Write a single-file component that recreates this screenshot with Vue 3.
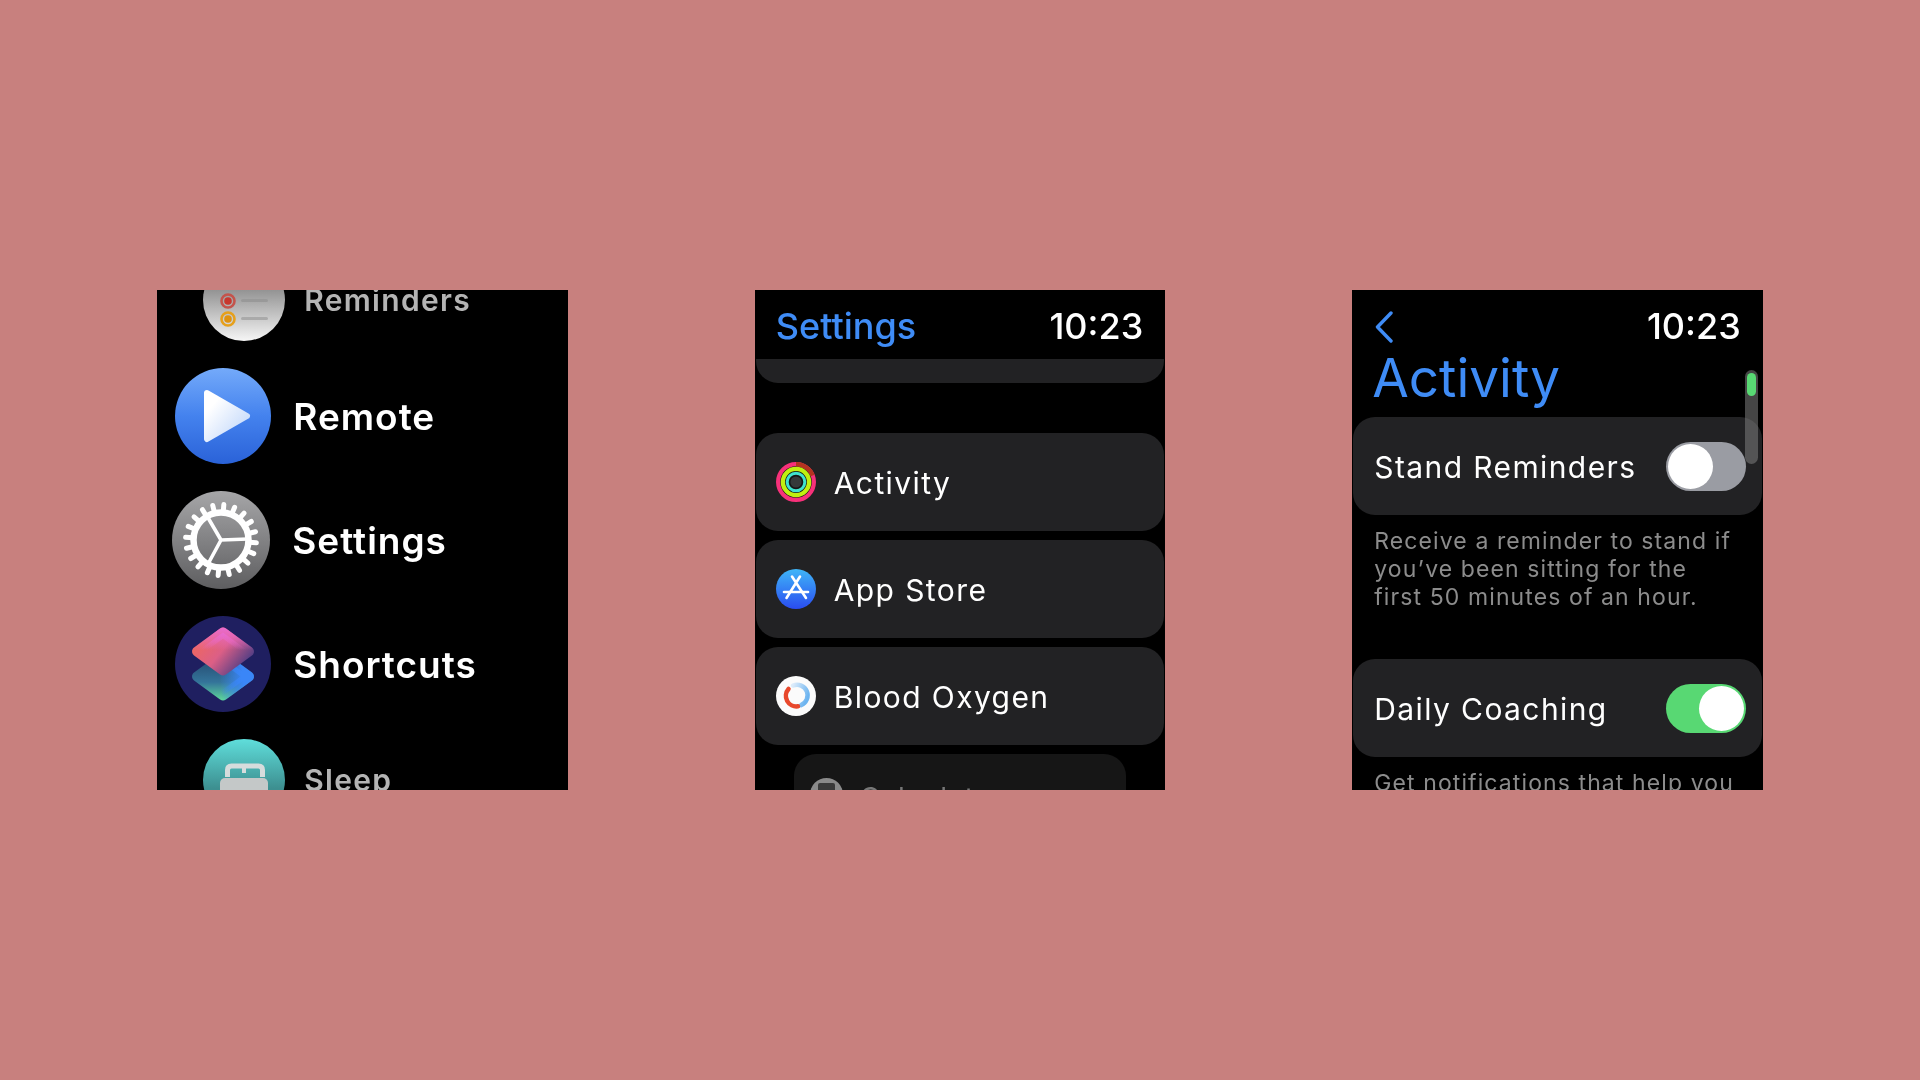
<template>
  <div class="page">
    <!-- App list -->
    <section class="screen">
      <div class="app-list">
        <div class="app-row small indent-far">
          <svg class="app-icon" viewBox="0 0 82 82">
            <defs>
              <linearGradient id="remBg" x1="0" y1="0" x2="0" y2="1">
                <stop offset="0.35" stop-color="#8f8f8f" />
                <stop offset="1" stop-color="#f6f6f6" />
              </linearGradient>
            </defs>
            <circle cx="41" cy="41" r="41" fill="url(#remBg)" />
            <circle cx="25" cy="42" r="6.5" fill="none" stroke="#c4544c" stroke-width="2.6" />
            <circle cx="25" cy="42" r="3.8" fill="#c8372e" />
            <circle cx="25" cy="60" r="6.5" fill="none" stroke="#e6a01c" stroke-width="2.6" />
            <circle cx="25" cy="60" r="3.8" fill="#e0920f" />
            <rect x="38" y="40" width="27" height="3" rx="1.5" fill="#999" />
            <rect x="38" y="58" width="27" height="3" rx="1.5" fill="#aaa" />
          </svg>
          <span class="app-name">Reminders</span>
        </div>

        <div class="app-row indent-remote">
          <svg class="app-icon" viewBox="0 0 96 96">
            <defs>
              <linearGradient id="remoteBg" x1="0" y1="0" x2="0" y2="1">
                <stop offset="0" stop-color="#74aafa" />
                <stop offset="0.5" stop-color="#4482ee" />
                <stop offset="1" stop-color="#2a62d8" />
              </linearGradient>
              <linearGradient id="remotePlay" x1="0" y1="0" x2="1" y2="1">
                <stop offset="0.2" stop-color="#ffffff" />
                <stop offset="1" stop-color="#bcd4fa" />
              </linearGradient>
            </defs>
            <circle cx="48" cy="48" r="48" fill="url(#remoteBg)" />
            <path d="M32 25 L72 48 L32 71 Z" fill="url(#remotePlay)" stroke="url(#remotePlay)" stroke-width="6" stroke-linejoin="round" />
          </svg>
          <span class="app-name">Remote</span>
        </div>

        <div class="app-row indent-settings">
          <svg class="app-icon gear-icon" viewBox="0 0 98 98">
            <defs>
              <linearGradient id="gearBg" x1="0" y1="0" x2="0" y2="1">
                <stop offset="0" stop-color="#a6a6a8" />
                <stop offset="1" stop-color="#5e5e60" />
              </linearGradient>
            </defs>
            <circle cx="49" cy="49" r="49" fill="url(#gearBg)" />
            <g stroke="#fff" fill="none">
              <line
                v-for="tooth in gearTeeth"
                :key="tooth.id"
                :x1="tooth.x1"
                :y1="tooth.y1"
                :x2="tooth.x2"
                :y2="tooth.y2"
                stroke-width="5"
                stroke-linecap="round"
              />
              <circle cx="49" cy="49" r="27.5" stroke-width="6.5" />
              <path d="M49 49 L76 48 M49 49 L35 25 M49 49 L36 73" stroke-width="3.6" />
            </g>
          </svg>
          <span class="app-name">Settings</span>
        </div>

        <div class="app-row indent-remote">
          <svg class="app-icon" viewBox="0 0 96 96">
            <defs>
              <linearGradient id="scTop" gradientUnits="userSpaceOnUse" x1="24" y1="18" x2="68" y2="54">
                <stop offset="0" stop-color="#f0685c" />
                <stop offset="0.5" stop-color="#dc5f86" />
                <stop offset="1" stop-color="#4c3c84" />
              </linearGradient>
              <linearGradient id="scTopPink" gradientUnits="userSpaceOnUse" x1="48" y1="10" x2="48" y2="34">
                <stop offset="0" stop-color="#ea6cd8" />
                <stop offset="1" stop-color="#ea6cd8" stop-opacity="0" />
              </linearGradient>
              <linearGradient id="scBottom" gradientUnits="userSpaceOnUse" x1="48" y1="42" x2="48" y2="86">
                <stop offset="0" stop-color="#24486e" />
                <stop offset="0.55" stop-color="#34749a" />
                <stop offset="1" stop-color="#62e09a" />
              </linearGradient>
              <linearGradient id="scBlue" gradientUnits="userSpaceOnUse" x1="44" y1="60" x2="78" y2="56">
                <stop offset="0" stop-color="#3a86f8" stop-opacity="0" />
                <stop offset="0.7" stop-color="#3a86f8" />
              </linearGradient>
            </defs>
            <circle cx="48" cy="48" r="48" fill="#1f1f60" />
            <polygon points="48,41.5 74,60.5 48,79.5 22,60.5" fill="url(#scBottom)" stroke="url(#scBottom)" stroke-width="10" stroke-linejoin="round" />
            <polygon points="48,41.5 74,60.5 48,79.5 22,60.5" fill="url(#scBlue)" stroke="url(#scBlue)" stroke-width="10" stroke-linejoin="round" />
            <polygon points="48,16.5 74,35.5 48,54.5 22,35.5" fill="url(#scTop)" stroke="url(#scTop)" stroke-width="10" stroke-linejoin="round" />
            <polygon points="48,16.5 74,35.5 48,54.5 22,35.5" fill="url(#scTopPink)" stroke="url(#scTopPink)" stroke-width="10" stroke-linejoin="round" />
          </svg>
          <span class="app-name">Shortcuts</span>
        </div>

        <div class="app-row small indent-far">
          <svg class="app-icon" viewBox="0 0 82 82">
            <defs>
              <linearGradient id="sleepBg" x1="0" y1="0" x2="0" y2="1">
                <stop offset="0" stop-color="#5fdedb" />
                <stop offset="0.6" stop-color="#3d8f90" />
              </linearGradient>
            </defs>
            <circle cx="41" cy="41" r="41" fill="url(#sleepBg)" />
            <path d="M24.5 38 V31 Q24.5 27 28.5 27 H55.5 Q59.5 27 59.5 31 V38" fill="none" stroke="#d6dcdc" stroke-width="5" />
            <path d="M41 27 V34" stroke="#d6dcdc" stroke-width="4" />
            <rect x="17" y="39" width="48" height="30" rx="5" fill="#c4c8c8" />
          </svg>
          <span class="app-name">Sleep</span>
        </div>
      </div>
    </section>

    <!-- Settings list -->
    <section class="screen">
      <header class="bar">
        <span class="bar-title">Settings</span>
        <span class="clock">10:23</span>
      </header>
      <div class="card card-tail"></div>

      <div class="card setting-row first-row">
        <svg class="row-icon" viewBox="0 0 40 40">
          <circle cx="20" cy="20" r="20" fill="#161616" />
          <circle cx="20" cy="20" r="17.9" fill="none" stroke="#f7317a" stroke-width="4.2" />
          <path d="M20 2.1 A17.9 17.9 0 0 1 36.7 13.5" fill="none" stroke="#b5341f" stroke-width="4.2" />
          <circle cx="20" cy="20" r="13.1" fill="none" stroke="#c0f010" stroke-width="4.4" />
          <circle cx="20" cy="20" r="8.8" fill="none" stroke="#3fe3ce" stroke-width="3" />
          <circle cx="20" cy="20" r="5.6" fill="#35393a" />
        </svg>
        <span class="row-label">Activity</span>
      </div>

      <div class="card setting-row">
        <svg class="row-icon" viewBox="0 0 40 40">
          <defs>
            <linearGradient id="storeBg" x1="0" y1="0" x2="0" y2="1">
              <stop offset="0" stop-color="#3fb6f8" />
              <stop offset="1" stop-color="#2a4cf0" />
            </linearGradient>
          </defs>
          <circle cx="20" cy="20" r="20" fill="url(#storeBg)" />
          <path d="M16 7.5 L30 29 M24 7.5 L10.5 29" stroke="#fff" stroke-width="2.6" stroke-linecap="round" fill="none" />
          <path d="M8 23 H32" stroke="#fff" stroke-width="2.6" stroke-linecap="round" fill="none" />
        </svg>
        <span class="row-label">App Store</span>
      </div>

      <div class="card setting-row">
        <svg class="row-icon" viewBox="0 0 40 40">
          <defs>
            <linearGradient id="oxyBlue" x1="0" y1="0" x2="1" y2="0.6">
              <stop offset="0" stop-color="#dcebfa" />
              <stop offset="1" stop-color="#6cb4f0" />
            </linearGradient>
          </defs>
          <circle cx="20" cy="20" r="20" fill="#fbfbfb" />
          <path d="M17 9.5 A10.5 10.5 0 0 1 25 29.2" fill="none" stroke="url(#oxyBlue)" stroke-width="4.5" stroke-linecap="round" />
          <path d="M12.5 13 A10.5 10.5 0 0 0 22 30.3" fill="none" stroke="#e8482c" stroke-width="4.5" stroke-linecap="round" />
        </svg>
        <span class="row-label">Blood Oxygen</span>
      </div>

      <div class="card peek-row">
        <svg class="peek-icon" viewBox="0 0 33 33">
          <circle cx="16.5" cy="16.5" r="16.5" fill="#8a8a8a" />
          <rect x="8" y="5" width="17" height="24" rx="2" fill="#3a3a3a" />
        </svg>
        <span class="peek-label">Calculator</span>
      </div>
    </section>

    <!-- Activity detail -->
    <section class="screen">
      <header class="bar detail-bar">
        <svg class="back" viewBox="0 0 18 32">
          <path d="M16 2 L2.5 16 L16 30" fill="none" stroke="#3f8cf6" stroke-width="3.4" stroke-linecap="round" stroke-linejoin="round" />
        </svg>
        <span class="clock">10:23</span>
      </header>
      <h1 class="detail-title">Activity</h1>

      <div class="card toggle-row">
        <span class="row-label">Stand Reminders</span>
        <span class="toggle"><span class="knob"></span></span>
      </div>
      <p class="note">Receive a reminder to stand if you’ve been sitting for the first 50 minutes of an hour.</p>

      <div class="card toggle-row second-toggle">
        <span class="row-label">Daily Coaching</span>
        <span class="toggle on"><span class="knob"></span></span>
      </div>
      <p class="note">Get notifications that help you close your rings each day.</p>

      <div class="scroll-track"><div class="scroll-thumb"></div></div>
    </section>
  </div>
</template>

<script setup>
// 20 teeth round the settings gear
const gearTeeth = Array.from({ length: 20 }, (_, i) => {
  const a = (i / 20) * Math.PI * 2 + 0.08
  return {
    id: i,
    x1: 49 + Math.cos(a) * 28,
    y1: 49 + Math.sin(a) * 28,
    x2: 49 + Math.cos(a) * 35.5,
    y2: 49 + Math.sin(a) * 35.5
  }
})
</script>

<style>
html,
body {
  background: #c8807e;
}
</style>

<style scoped>
.page {
  height: 1080px;
  width: 1920px;
  display: flex;
  justify-content: center;
  align-items: center;
  gap: 187px;
  background: #c8807e;
  font-family: Inter, "Liberation Sans", sans-serif;
}

.screen {
  position: relative;
  width: 410.5px;
  height: 500px;
  background: #000;
  overflow: hidden;
  color: #fff;
  filter: blur(0.45px);
}

/* App list */
.app-list {
  display: flex;
  flex-direction: column;
  gap: 27px;
  margin-top: -31px;
}

.app-row {
  display: flex;
  align-items: center;
  gap: 22px;
  font-size: 37px;
  font-weight: 600;
  letter-spacing: 1px;
}

.app-icon {
  display: block;
  width: 96px;
  height: 96px;
  flex: none;
}

.gear-icon {
  width: 98px;
  height: 98px;
}

.app-row.small {
  gap: 19px;
  font-size: 30px;
  letter-spacing: 1.3px;
  color: #b4b4b4;
}

.app-row.small .app-icon {
  width: 82px;
  height: 82px;
}

.indent-far {
  padding-left: 46px;
}

.indent-remote {
  padding-left: 18px;
}

.indent-settings {
  padding-left: 15px;
}

/* Shared watch chrome */
.bar {
  display: flex;
  justify-content: space-between;
  align-items: center;
  height: 66px;
  padding: 3px 22px 0 21px;
}

.bar-title {
  font-size: 36px;
  font-weight: 500;
  color: #3f8cf6;
}

.clock {
  font-size: 36px;
  font-weight: 500;
}

.card {
  background: #222224;
  border-radius: 22px;
  margin: 0 1px;
}

.card-tail {
  height: 24px;
  border-radius: 0 0 22px 22px;
}

.setting-row {
  display: flex;
  align-items: center;
  gap: 18px;
  height: 98px;
  padding-left: 20px;
  margin-top: 9px;
}

.first-row {
  margin-top: 50px;
}

.row-icon {
  display: block;
  width: 40px;
  height: 40px;
  flex: none;
}

.row-label {
  padding-top: 2px;
  font-size: 30px;
  letter-spacing: 1.4px;
}

.peek-row {
  display: flex;
  align-items: flex-start;
  gap: 17px;
  height: 80px;
  margin: 9px 39px 0;
  padding: 24px 16px 0;
  background: #161616;
  color: #777;
  font-size: 28px;
}

.peek-icon {
  display: block;
  width: 33px;
  height: 33px;
  flex: none;
}

.peek-label {
  padding-top: 3px;
  letter-spacing: 1px;
}

/* Activity detail */
.detail-bar {
  height: 44px;
  padding: 14px 22px 0 23px;
}

.back {
  display: block;
  width: 18px;
  height: 32px;
  margin-top: 2px;
}

.detail-title {
  margin: 0 0 9px;
  padding-left: 20px;
  font-size: 53px;
  line-height: 60px;
  font-weight: 400;
  color: #3f8cf6;
}

.toggle-row {
  display: flex;
  align-items: center;
  justify-content: space-between;
  height: 98px;
  padding: 0 16px 0 21px;
}

.second-toggle {
  margin-top: 48px;
}

.toggle {
  display: block;
  position: relative;
  width: 80px;
  height: 49px;
  border-radius: 25px;
  background: #9a9ca3;
  flex: none;
}

.toggle.on {
  background: #58d873;
}

.knob {
  position: absolute;
  top: 2px;
  left: 2px;
  width: 45px;
  height: 45px;
  border-radius: 50%;
  background: #fff;
}

.toggle.on .knob {
  left: 33px;
}

.note {
  margin: 12px 0 0;
  padding: 0 26px 0 22px;
  font-size: 23px;
  line-height: 28px;
  letter-spacing: 1.1px;
  color: #8c8c8c;
}

.scroll-track {
  position: absolute;
  top: 80px;
  right: 5px;
  width: 13px;
  height: 94px;
  border-radius: 7px;
  background: rgba(125, 125, 125, 0.55);
}

.scroll-thumb {
  width: 9px;
  height: 23px;
  margin: 3px 2px 0;
  border-radius: 5px;
  background: #58d873;
}
</style>
